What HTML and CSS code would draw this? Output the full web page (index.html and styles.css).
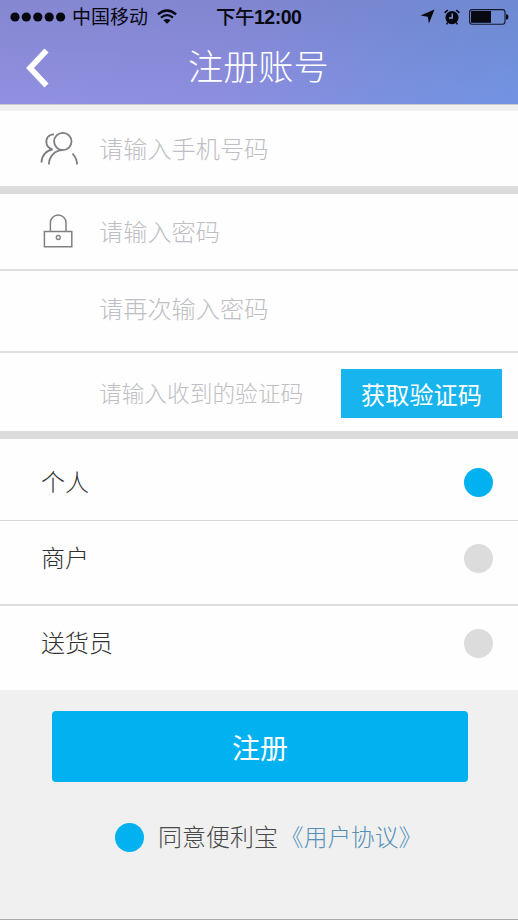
FILE: index.html
```html
<!DOCTYPE html>
<html lang="zh-CN">
<head>
<meta charset="utf-8">
<title>注册账号</title>
<link rel="stylesheet" href="styles.css">
</head>
<body>
<header class="header">
  <div class="status">
    <div class="status-left">
      <svg class="signal" width="56" height="10" viewBox="0 0 56 10"><circle cx="5" cy="5" r="4.6"/><circle cx="16.3" cy="5" r="4.6"/><circle cx="27.8" cy="5" r="4.6"/><circle cx="39.2" cy="5" r="4.6"/><circle cx="50.6" cy="5" r="4.6"/></svg>
      <span class="carrier">中国移动</span>
      <svg class="wifi" width="20" height="15" viewBox="0 0 20 15"><g fill="none" stroke="#080811"><path d="M.9 5.3Q10-2.5 19.1 5.3" stroke-width="2.4"/><path d="M4 8.7Q10 3.6 16 8.7" stroke-width="2.2"/></g><path d="M6.4 11.3Q10 8.5 13.6 11.3L10 14.8Z"/></svg>
    </div>
    <span class="clock"><span class="period">下午</span>12:00</span>
    <div class="status-right">
      <svg width="15" height="15" viewBox="0 0 15 15"><path d="M14.500.5 8.900 14.400 7.800 7.700.5 6.500Z"/></svg>
      <svg width="16" height="16" viewBox="0 0 16 16"><circle cx="8" cy="8.600" r="6.600"/><path d="M.6 3.800 3.800 1M15.400 3.800 12.200 1" fill="none" stroke="#080811" stroke-width="1.600"/><path d="M3.800 13.300 2.500 15.300M12.200 13.300l1.300 2" stroke="#080811" stroke-width="1.400"/><path d="M8.200 4.600V9H5" fill="none" stroke="#8c9bdc" stroke-width="1.300"/></svg>
      <svg width="40" height="16" viewBox="0 0 40 16"><rect x=".6" y=".6" width="35.400" height="14.600" rx="2.500" fill="none" stroke="#15172a" stroke-width="1.100"/><rect x="2" y="2" width="20" height="11.800"/><path d="M37 5.300h1q1.400 0 1.400 2.600T38 10.500h-1Z"/></svg>
    </div>
  </div>
  <div class="titlebar">
    <svg class="back" width="24" height="40" viewBox="0 0 24 40"><path d="M20.500 2.500 4 20 20.500 37.500" fill="none" stroke="#fff" stroke-width="5.700"/></svg>
    <h1 class="title">注册账号</h1>
  </div>
</header>
<main>
  <section class="group">
    <div class="row row-phone">
      <svg class="icon" width="40" height="36" viewBox="0 0 40 36"><g fill="none" stroke="#7d7d82" stroke-width="1.800"><circle cx="22.800" cy="10.500" r="8.700"/><path d="M14 3.300C8.500 3.300 5.500 7.500 6.500 12.500c.6 3 2.100 4.600 6 6C6.500 19.300 1.600 24.500 1.500 31.500M8.900 33.500C9 26 14.500 19 23 19.200M32.500 22.500Q37.200 28 37 33.500"/></g></svg>
      <span class="hint">请输入手机号码</span>
    </div>
  </section>
  <section class="group">
    <div class="row row-password">
      <svg class="icon" width="40" height="36" viewBox="0 0 40 36"><g fill="none" stroke="#808083" stroke-width="1.500"><path d="M4.400 18.600h27.400v15.200H4.400ZM10.400 18.600V9.800a7.800 7.800 0 0 1 15.600 0v8.800"/><circle cx="18.300" cy="24.500" r="2" stroke-width="1.300"/></g></svg>
      <span class="hint">请输入密码</span>
    </div>
    <div class="row row-repeat"><span class="hint">请再次输入密码</span></div>
    <div class="row row-code"><span class="hint hint-code">请输入收到的验证码</span><button class="get-code">获取验证码</button></div>
  </section>
  <section class="group">
    <div class="row option option-one"><span>个人</span><i class="dot dot-on"></i></div>
    <div class="row option option-two"><span>商户</span><i class="dot"></i></div>
    <div class="row option option-three"><span>送货员</span><i class="dot"></i></div>
  </section>
</main>
<footer class="footer">
  <button class="submit">注册</button>
  <div class="agree"><i class="dot dot-on"></i><span class="agree-text">同意便利宝</span><a class="terms">《用户协议》</a></div>
</footer>
</body>
</html>
```
FILE: styles.css
```css
* { box-sizing: border-box; }
body {
  margin: 0;
  height: 920px;
  display: flex;
  flex-direction: column;
  overflow: hidden;
  background: #f0f0f0;
  font-family: "Liberation Sans", "Noto Sans CJK SC", sans-serif;
  font-weight: 300;
}
svg { display: block; flex: none; }
button { border: 0; padding: 0; font-family: inherit; color: #fff; }
.header {
  height: 104px;
  flex: none;
  background: linear-gradient(180deg, rgba(110, 120, 180, .36), rgba(150, 150, 230, .1)), linear-gradient(100deg, #918fe0 0%, #8c8ddf 45%, #7591e0 80%, #6d93e2 100%);
}
.status {
  height: 33px;
  padding: 0 9px 0 10px;
  display: grid;
  grid-template-columns: 206px 1fr auto;
  align-items: center;
  color: #080811;
  fill: #080811;
}
.status-left, .status-right { display: flex; align-items: center; }
.carrier { margin-left: 6px; padding-top: 2px; font-size: 19px; line-height: 30px; font-weight: 400; }
.wifi { margin-left: 9px; }
.clock { font-size: 19.500px; letter-spacing: -.5px; line-height: 30px; padding-top: 1px; font-weight: 700; }
.period { font-weight: 500; }
.status-right { gap: 9px; }
.titlebar {
  height: 70px;
  display: grid;
  grid-template-columns: 188px 1fr;
  align-items: center;
}
.back { margin-left: 26px; }
.title { margin: 0; font-size: 35.200px; line-height: 50px; font-weight: 300; color: #fff; }
main { border-top: 1px solid #c9c8ca; flex: none; }
main::before { content: ""; display: block; height: 6px; background: #efefef; }
.group { background: #fefefe; }
.group + .group { border-top: 8px solid #dcdcdc; }
.row { display: flex; align-items: center; }
.icon { margin-left: 40px; margin-right: 19px; }
.hint { padding-top: 3px; font-size: 24.200px; line-height: 36px; color: #bebec4; }
.row-phone { height: 75px; }
.row-password { height: 75px; }
.row-password .icon { margin-top: -2px; }
.row-repeat { height: 82px; padding-left: 99px; border-top: 2px solid #e0e0e0; padding-bottom: 6px; }
.row-code { height: 80px; padding: 2px 16px 0 99px; justify-content: space-between; border-top: 2px solid #dfdfdf; }
.hint-code { font-size: 22.700px; padding-top: 1px; }
.get-code { width: 161px; height: 49px; background: #18b4ed; font-size: 24.200px; font-weight: 400; }
.option { padding: 0 25px 0 41px; justify-content: space-between; font-size: 24px; line-height: 36px; color: #303032; }
.option span { padding-top: 1px; }
.option-one { height: 81px; padding-top: 6px; }
.option-two { height: 84px; border-top: 1.500px solid #d8d8d8; padding-bottom: 8px; }
.option-three { height: 86px; border-top: 2px solid #dfdfdf; padding-bottom: 10px; }
.dot { width: 29px; height: 29px; border-radius: 50%; background: #dcdcdc; flex: none; }
.dot-on { background: #02b1ef; }
.footer {
  flex: 1;
  padding: 21px 0 0 2px;
  display: flex;
  flex-direction: column;
  align-items: center;
  border-bottom: 1px solid #aaa;
}
.submit { width: 416px; height: 71px; border-radius: 4px; background: #02b1ef; font-size: 28px; font-weight: 400; }
.agree { margin-top: 36px; width: 290px; display: flex; align-items: center; font-size: 24px; line-height: 36px; white-space: nowrap; }
.agree-text { margin-left: 14px; padding-top: 1px; color: #484848; }
.terms { padding-top: 2px; margin-left: 2px; font-size: 23.700px; color: #5590b8; }
```
